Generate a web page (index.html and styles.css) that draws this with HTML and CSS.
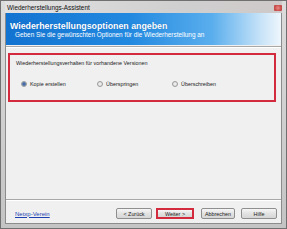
FILE: index.html
```html
<!DOCTYPE html>
<html>
<head>
<meta charset="utf-8">
<link rel="stylesheet" href="styles.css">
</head>
<body>
<div class="window">
  <div class="titlebar">
    <span class="title">Wiederherstellungs-Assistent</span>
    <span class="close"></span>
  </div>
  <div class="client">
    <div class="header">
      <div class="h-title">Wiederherstellungsoptionen angeben</div>
      <div class="h-sub">Geben Sie die gewünschten Optionen für die Wiederherstellung an</div>
    </div>
    <div class="sep"></div>
    <div class="main">
      <div class="group">
        <div class="g-label">Wiederherstellungsverhalten für vorhandene Versionen</div>
        <div class="radios">
          <label class="radio r1"><span class="dot checked"></span>Kopie erstellen</label>
          <label class="radio r2"><span class="dot"></span>Überspringen</label>
          <label class="radio r3"><span class="dot"></span>Überschreiben</label>
        </div>
      </div>
    </div>
    <div class="sep"></div>
    <div class="footer">
      <a class="link">Netxp-Verein</a>
      <div class="buttons">
        <span class="btn b-back">&lt; Zurück</span>
        <span class="btn b-next">Weiter &gt;</span>
        <span class="btn b-cancel">Abbrechen</span>
        <span class="btn b-help">Hilfe</span>
      </div>
    </div>
  </div>
</div>
</body>
</html>
```

FILE: styles.css
```css
html, body {
  margin: 0;
  padding: 0;
  width: 287px;
  height: 229px;
  overflow: hidden;
  background: #fff;
  font-family: "Liberation Sans", Arial, sans-serif;
}
.window {
  box-sizing: border-box;
  width: 287px;
  height: 229px;
  display: flex;
  flex-direction: column;
  background: linear-gradient(to bottom, #dcdcdc, #c4c4c4);
  border: 1px solid #707070;
  padding: 0 4px 4px 4px;
}
.titlebar {
  height: 12px;
  display: flex;
  align-items: center;
  justify-content: space-between;
  background: linear-gradient(to right, #e2e2e2, #d0d0d0 60%, #cfc9c9);
}
.title {
  font-size: 6.4px;
  color: #111;
  margin-left: 2px;
  margin-top: 1px;
}
.close {
  width: 8px;
  height: 6px;
  margin-top: 2px;
  border-radius: 1px;
  background: radial-gradient(circle at 50% 50%, #e88 0, #c9504a 60%, #b44 100%);
}
.client {
  flex: 1;
  display: flex;
  flex-direction: column;
  background: #f0f0f0;
  border: 1px solid #8c8c8c;
  border-top: none;
}
.header {
  height: 32px;
  box-sizing: border-box;
  padding: 8px 0 0 4px;
  background: linear-gradient(to right, #1273d0 0%, #2289e0 45%, #5aaeed 75%, #c9e4f8 93%, #eef6fc 100%);
  color: #fff;
}
.h-title {
  font-size: 8.8px;
  font-weight: bold;
  line-height: 10px;
  text-shadow: 0 0 1px #1560b0;
}
.h-sub {
  font-size: 6.4px;
  line-height: 8px;
  margin-left: 5px;
}
.sep {
  height: 0;
  border-top: 1px solid #a8a8a8;
  border-bottom: 1px solid #fff;
  margin: 1px 0 0 0;
}
.main {
  flex: 1;
  padding: 5px 5px 0 2px;
}
.group {
  height: 49px;
  box-sizing: border-box;
  border: 2px solid #d42a3e;
  padding: 4px 0 0 6px;
}
.g-label {
  font-size: 5.4px;
  color: #222;
  line-height: 8px;
}
.radios {
  display: flex;
  margin-top: 14px;
  font-size: 5.4px;
  color: #222;
}
.radio {
  display: flex;
  align-items: center;
  gap: 3px;
}
.r1 { width: 76px; margin-left: 5px; }
.r2 { width: 75px; }
.dot {
  width: 4px;
  height: 4px;
  border-radius: 50%;
  border: 1px solid #9a9a9a;
  background: radial-gradient(circle, #f4f4f4, #d8d8d8);
}
.dot.checked {
  background: radial-gradient(circle, #3a5f9a 0, #5b7fb4 60%, #c8d4e4 100%);
}
.footer {
  height: 22px;
  box-sizing: border-box;
  display: flex;
  align-items: center;
  justify-content: space-between;
  padding: 3px 4px 0 9px;
}
.link {
  font-size: 6px;
  color: #1a3fb0;
  text-decoration: underline;
}
.buttons {
  display: flex;
  gap: 4px;
}
.btn {
  box-sizing: border-box;
  height: 11px;
  display: flex;
  align-items: center;
  justify-content: center;
  font-size: 5.4px;
  color: #222;
  border: 1px solid #8f8f8f;
  border-radius: 2px;
  background: linear-gradient(to bottom, #f6f6f6, #e2e2e2 50%, #d6d6d6);
}
.b-back { width: 36px; }
.b-next { width: 38px; border: 2px solid #d42a3e; border-radius: 0; }
.b-cancel { width: 34px; margin-left: 3px; }
.b-help { width: 36px; margin-left: 2px; }
```
